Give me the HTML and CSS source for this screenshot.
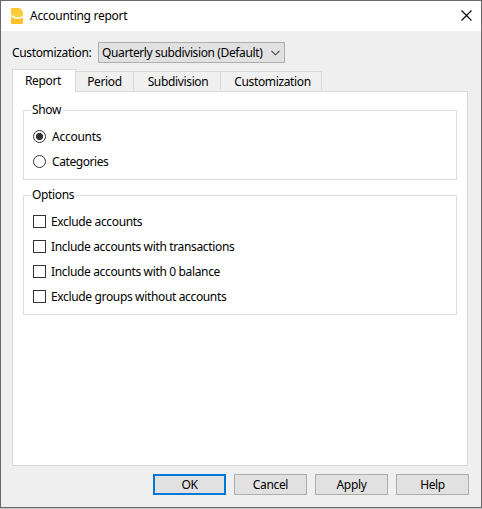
FILE: index.html
```html
<!DOCTYPE html>
<html lang="en">
<head>
<meta charset="utf-8">
<title>Accounting report</title>
<link rel="stylesheet" href="styles.css">
</head>
<body>
<div class="window">
  <header class="titlebar">
    <svg class="logo" width="12" height="16" viewBox="0 0 12 16">
      <defs><linearGradient id="gold" x2="0" y2="1"><stop stop-color="#ffc52e"/><stop offset="1" stop-color="#ffd24a"/></linearGradient></defs>
      <path fill="url(#gold)" d="M1 0h7.500L12 3.500v4.200Q6 11.600 0 7V1Q0 0 1 0z"/>
      <path fill="#ffc02b" d="M0 8.400Q6 13 12 9.300V15q0 1-1 1H1q-1 0-1-1z"/>
    </svg>
    <h1 class="title">Accounting report</h1>
    <svg class="close" width="11" height="11" viewBox="0 0 11 11"><path d="M.5.5l10 10M10.500.5l-10 10" stroke="#000" stroke-width="1.100"/></svg>
  </header>
  <main class="content">
    <div class="custom-row">
      <span class="custom-label">Customization:</span>
      <div class="combo"><span>Quarterly subdivision (Default)</span>
        <svg width="9" height="6" viewBox="0 0 9 6"><path d="M.5.8l4 4 4-4" fill="none" stroke="#444" stroke-width="1.100"/></svg>
      </div>
    </div>
    <nav class="tabs">
      <div class="tab active"><span>Report</span></div>
      <div class="tab period"><span>Period</span></div>
      <div class="tab subdivision"><span>Subdivision</span></div>
      <div class="tab customization"><span>Customization</span></div>
    </nav>
    <section class="pane">
      <fieldset class="group show">
        <legend>Show</legend>
        <div class="option"><i class="radio checked"></i><span>Accounts</span></div>
        <div class="option"><i class="radio"></i><span>Categories</span></div>
      </fieldset>
      <fieldset class="group options">
        <legend>Options</legend>
        <div class="option"><i class="check"></i><span>Exclude accounts</span></div>
        <div class="option"><i class="check"></i><span>Include accounts with transactions</span></div>
        <div class="option"><i class="check"></i><span>Include accounts with 0 balance</span></div>
        <div class="option"><i class="check"></i><span>Exclude groups without accounts</span></div>
      </fieldset>
    </section>
    <footer class="buttons">
      <button class="primary">OK</button>
      <button>Cancel</button>
      <button>Apply</button>
      <button>Help</button>
    </footer>
  </main>
</div>
</body>
</html>
```
FILE: styles.css
```css
* { box-sizing: border-box; }
body {
  margin: 0;
  background: #c8c8c8;
  font: 12px/16px "Noto Sans", "Open Sans", sans-serif;
  letter-spacing: -0.35px;
  color: #000;
}
.window {
  width: 482px;
  height: 508px;
  border: 1px solid #6b6969;
  background: #efefef;
}
.titlebar {
  display: flex;
  align-items: center;
  height: 30px;
  padding: 0 9px 0 10px;
  background: #fff;
}
.title {
  flex: 1;
  margin: 0 0 0 7px;
  font-size: 12px;
  font-weight: 400;
  letter-spacing: -0.28px;
}
.close { margin-bottom: 2px; }
.content { padding: 11px 13px 0 11px; }
.custom-row { display: flex; align-items: center; height: 21px; white-space: nowrap; }
.custom-label { flex: none; width: 86px; }
.combo {
  display: flex;
  align-items: center;
  justify-content: space-between;
  width: 187px;
  height: 21px;
  padding: 0 4px 0 3px;
  border: 1px solid #adadad;
  background: #e1e1e1;
}
.combo span { letter-spacing: -0.38px; }
.combo svg { flex: none; }
.tabs { display: flex; align-items: flex-end; height: 22px; margin-top: 6px; }
.tab {
  display: flex;
  justify-content: center;
  align-items: center;
  height: 20px;
  padding-left: 1px;
  border: 1px solid #d9d9d9;
  border-left: 0;
  border-bottom: 0;
  background: #f0f0f0;
}
.active {
  position: relative;
  width: 64px;
  height: 23px;
  margin-bottom: -1px;
  padding-right: 3px;
  border-left: 1px solid #d9d9d9;
  background: #fff;
}
.period { width: 58px; padding-left: 0; }
.subdivision { width: 87px; padding-left: 2px; }
.customization { width: 101px; padding-left: 3px; }
.pane {
  width: 456px;
  height: 375px;
  padding: 10px;
  border: 1px solid #d9d9d9;
  background: #fff;
}
.group {
  width: 434px;
  margin: 0;
  padding: 0 9px;
  border: 1px solid #dcdcdc;
}
.show { height: 78px; }
.options { height: 128px; margin-top: 7px; }
.group legend { height: 16px; margin-left: -2px; padding: 0 2px 0 1px; }
.option { display: flex; align-items: center; height: 25px; gap: 5px; }
.group legend + .option { margin-top: 6px; }
.show .option span { letter-spacing: -0.25px; }
.show .option + .option span { letter-spacing: -0.42px; }
.check, .radio { width: 13px; height: 13px; border: 1px solid #333; background: #fff; }
.radio { border-radius: 50%; margin-right: 1px; }
.checked { background: radial-gradient(circle, #333 0 3.300px, #fff 3.900px); }
.buttons { display: flex; gap: 8px; margin: 8px -1px 0 141px; }
.buttons button {
  width: 73px;
  height: 21px;
  padding: 0;
  border: 1px solid #adadad;
  background: #e1e1e1;
  color: #000;
  font: inherit;
  letter-spacing: inherit;
}
.buttons .primary { border: 2px solid #0078d7; }
```
